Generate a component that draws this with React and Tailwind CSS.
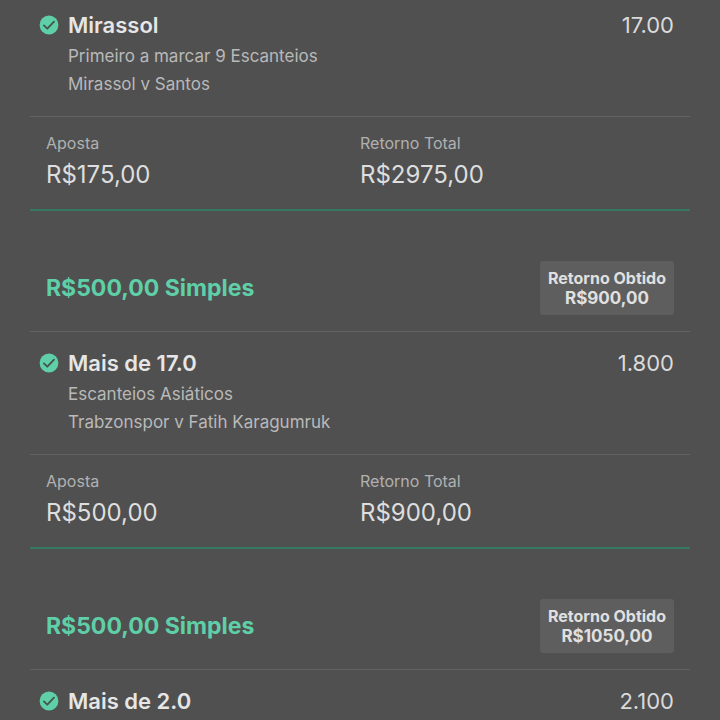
import React from 'react';

const slips = [
  {
    id: 'mirassol',
    pick: 'Mirassol',
    odds: '17.00',
    market: 'Primeiro a marcar 9 Escanteios',
    match: 'Mirassol v Santos',
    stake: 'R$175,00',
    total: 'R$2975,00',
  },
  {
    id: 'trabzonspor',
    title: 'R$500,00 Simples',
    returned: 'R$900,00',
    pick: 'Mais de 17.0',
    odds: '1.800',
    market: 'Escanteios Asiáticos',
    match: 'Trabzonspor v Fatih Karagumruk',
    stake: 'R$500,00',
    total: 'R$900,00',
  },
  {
    id: 'mais-de-2',
    title: 'R$500,00 Simples',
    returned: 'R$1050,00',
    pick: 'Mais de 2.0',
    odds: '2.100',
  },
];

function CheckIcon() {
  return (
    <svg viewBox="0 0 20 20" className="w-5 h-5 shrink-0" aria-hidden="true">
      <circle cx="10" cy="10" r="9.4" fill="#5fcfa8" />
      <path
        d="M4.9 10.4 8.3 13.7 15 6.7"
        fill="none"
        stroke="#46534e"
        strokeWidth="1.8"
        strokeLinecap="round"
        strokeLinejoin="round"
      />
    </svg>
  );
}

function SlipHeader({ title, returned }) {
  return (
    <header className="flex items-center justify-between px-4 pt-[50px] pb-4 border-b border-[#626262]">
      <h2 className="text-[23px] leading-7 font-bold text-[#5fcfa8]">{title}</h2>
      <div className="rounded-[3px] bg-[#5e5e5e] px-2 py-[7px] text-center font-bold text-[#e0e0e0]">
        <p className="text-base leading-5">Retorno Obtido</p>
        <p className="text-[17px] leading-5">{returned}</p>
      </div>
    </header>
  );
}

function Selection({ pick, odds, market, match }) {
  return (
    <div className="pl-[9px] pr-4 pt-[15px]">
      <div className="flex items-center justify-between">
        <div className="flex items-center gap-[9px]">
          <CheckIcon />
          <h3 className="text-[22px] leading-8 font-semibold text-[#e6e6e6]">{pick}</h3>
        </div>
        <span className="text-[22px] leading-8 text-[#dadada]">{odds}</span>
      </div>
      {market && (
        <div className="pl-[29px] pt-px pb-[18px] text-[17px] leading-7 text-[#b9b9b9]">
          <p>{market}</p>
          <p>{match}</p>
        </div>
      )}
    </div>
  );
}

function Amount({ label, value }) {
  return (
    <div>
      <dt className="text-base leading-5 text-[#b0b0b0]">{label}</dt>
      <dd className="pt-1 text-2xl leading-9 text-[#dedede]">{value}</dd>
    </div>
  );
}

function BetSlip({ slip }) {
  return (
    <article>
      {slip.title && <SlipHeader title={slip.title} returned={slip.returned} />}
      <Selection pick={slip.pick} odds={slip.odds} market={slip.market} match={slip.match} />
      {slip.stake && (
        <dl className="grid grid-cols-2 border-t border-t-[#626262] border-b-2 border-b-[#33785f] p-4">
          <Amount label="Aposta" value={slip.stake} />
          <Amount label="Retorno Total" value={slip.total} />
        </dl>
      )}
    </article>
  );
}

export default function App() {
  return (
    <main className="h-screen overflow-hidden bg-[#505050] font-['Inter',sans-serif]">
      <div className="-mt-1.5 mx-[30px]">
        {slips.map((slip) => (
          <BetSlip key={slip.id} slip={slip} />
        ))}
      </div>
    </main>
  );
}
